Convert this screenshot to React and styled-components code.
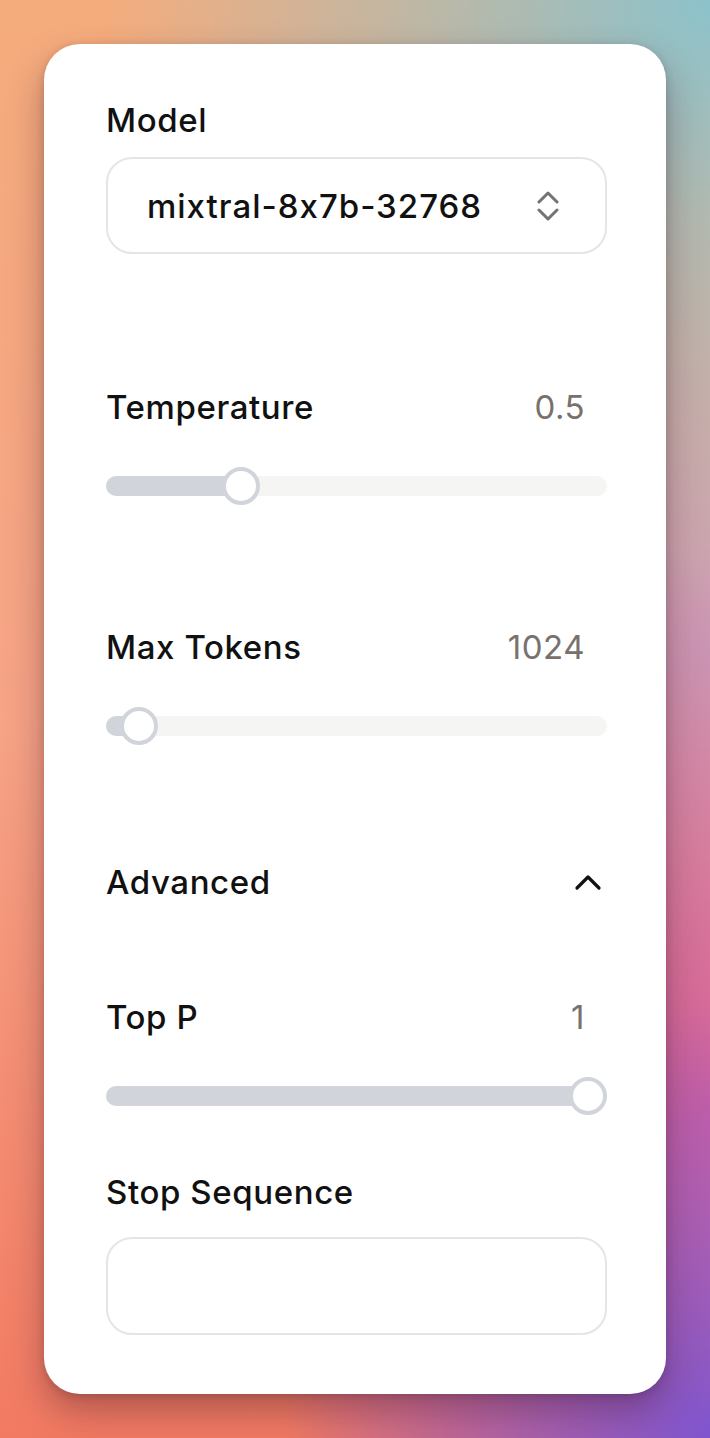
import React from 'react';
import styled, { createGlobalStyle } from 'styled-components';

const GlobalStyle = createGlobalStyle`
  html, body {
    margin: 0;
    padding: 0;
  }
  body {
    font-family: Inter, "Noto Sans", "Liberation Sans", sans-serif;
    font-feature-settings: "calt" 0;
    -webkit-font-smoothing: antialiased;
  }
`;

const Backdrop = styled.div`
  width: 710px;
  height: 1438px;
  box-sizing: border-box;
  padding: 44px;
  background:
    radial-gradient(circle at 100% 0%, #8cc2cb 0%, rgba(140, 194, 203, 0) 38%),
    radial-gradient(ellipse 60% 30% at 100% 100%, #7f55cf 0%, rgba(127, 85, 207, 0) 100%),
    radial-gradient(ellipse 70% 40% at 100% 78%, #d0609f 0%, rgba(208, 96, 159, 0) 100%),
    radial-gradient(ellipse 60% 30% at 100% 45%, #c8a0b8 0%, rgba(200, 160, 184, 0) 100%),
    linear-gradient(180deg, #f5ac7c 0%, #f6a386 50%, #f27a62 100%);
`;

const Card = styled.div`
  background: #fff;
  border-radius: 36px;
  box-shadow: 0 18px 36px rgba(60, 20, 40, 0.35), 0 2px 8px rgba(0, 0, 0, 0.15);
  padding: 58px 59px 59px 62px;
  display: flex;
  flex-direction: column;
`;

const Section = styled.div`
  display: flex;
  flex-direction: column;
  margin-top: ${p => p.$gap || 0}px;
`;

const LabelRow = styled.div`
  display: flex;
  align-items: center;
  justify-content: space-between;
  height: 36px;
`;

const Label = styled.span`
  font-size: 33px;
  font-weight: 500;
  color: #111;
  letter-spacing: 0.6px;
`;

const Value = styled.span`
  font-size: 33px;
  font-weight: 400;
  color: #78716c;
  letter-spacing: 0.5px;
  padding-right: 22px;
`;

const Select = styled.div`
  margin-top: 19px;
  height: 97px;
  box-sizing: border-box;
  border: 2px solid #e5e5e5;
  border-radius: 26px;
  display: flex;
  align-items: center;
  justify-content: space-between;
  padding: 0 46px 0 39px;
  font-size: 33px;
  font-weight: 500;
  letter-spacing: 1px;
  color: #111;
`;

const Input = styled.div`
  margin-top: 27px;
  height: 98px;
  box-sizing: border-box;
  border: 2px solid #e5e5e5;
  border-radius: 26px;
`;

const SliderWrap = styled.div`
  margin-top: 41px;
  height: 40px;
  position: relative;
  display: flex;
  align-items: center;
`;

const Track = styled.div`
  width: 100%;
  height: 20px;
  border-radius: 10px;
  background: #f5f5f4;
  overflow: hidden;
`;

const Fill = styled.div`
  height: 100%;
  background: #d1d5db;
`;

const Thumb = styled.div`
  position: absolute;
  top: 1px;
  width: 38px;
  height: 38px;
  box-sizing: border-box;
  margin-left: -19px;
  border-radius: 50%;
  background: #fff;
  border: 4px solid #d1d5db;
`;

const Toggle = styled.div`
  display: flex;
  align-items: center;
  justify-content: space-between;
  height: 36px;
  padding-right: 5px;
`;

const THUMB = 19;
const TRACK = 501;

function Slider({ value, min, max }) {
  const ratio = (value - min) / (max - min);
  const pos = THUMB + ratio * (TRACK - THUMB * 2);
  return (
    <SliderWrap>
      <Track>
        <Fill style={{ width: pos }} />
      </Track>
      <Thumb style={{ left: pos }} />
    </SliderWrap>
  );
}

function Field({ label, value, min, max, gap }) {
  return (
    <Section $gap={gap}>
      <LabelRow>
        <Label>{label}</Label>
        <Value>{value}</Value>
      </LabelRow>
      <Slider value={value} min={min} max={max} />
    </Section>
  );
}

const ChevronsUpDown = () => (
  <svg width="22" height="32" viewBox="0 0 22 32" fill="none" stroke="#737373" strokeWidth="3" strokeLinecap="round" strokeLinejoin="round">
    <polyline points="2,12 11,3 20,12" />
    <polyline points="2,20 11,29 20,20" />
  </svg>
);

const ChevronUp = () => (
  <svg width="28" height="18" viewBox="0 0 28 18" fill="none" stroke="#111" strokeWidth="3.2" strokeLinecap="round" strokeLinejoin="round">
    <polyline points="3,15 14,4 25,15" />
  </svg>
);

export default function App() {
  return (
    <>
      <GlobalStyle />
      <Backdrop>
        <Card>
          <Section>
            <LabelRow>
              <Label>Model</Label>
            </LabelRow>
            <Select>
              <span>mixtral-8x7b-32768</span>
              <ChevronsUpDown />
            </Select>
          </Section>

          <Field label="Temperature" value={0.5} min={0} max={2} gap={135} />
          <Field label="Max Tokens" value={1024} min={0} max={32768} gap={123} />

          <Section $gap={118}>
            <Toggle>
              <Label>Advanced</Label>
              <ChevronUp />
            </Toggle>
          </Section>

          <Field label="Top P" value={1} min={0} max={1} gap={99} />

          <Section $gap={58}>
            <LabelRow>
              <Label>Stop Sequence</Label>
            </LabelRow>
            <Input />
          </Section>
        </Card>
      </Backdrop>
    </>
  );
}
